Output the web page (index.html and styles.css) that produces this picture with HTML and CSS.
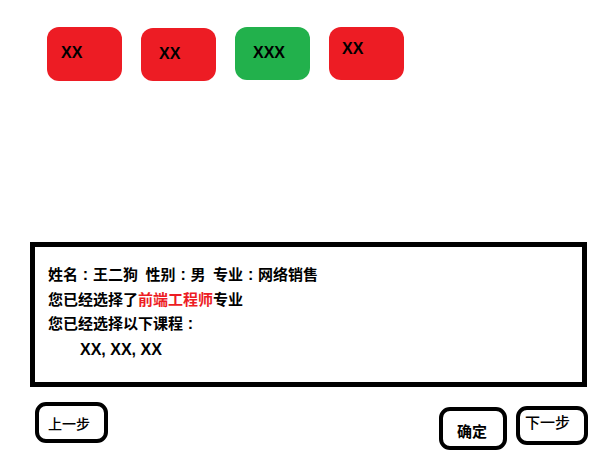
FILE: index.html
```html
<!DOCTYPE html>
<html lang="zh-CN">
<head>
<meta charset="utf-8">
<title>选课确认</title>
<link rel="stylesheet" href="styles.css">
</head>
<body>
<div class="page">
  <div class="tiles">
    <div class="tile tile--a">XX</div>
    <div class="tile tile--b">XX</div>
    <div class="tile tile--c tile--green">XXX</div>
    <div class="tile tile--d">XX</div>
  </div>

  <div class="summary">
    <p class="line">姓名<span class="colon">:</span>王二狗<span class="gap"></span>性别<span class="colon">:</span>男<span class="gap"></span>专业<span class="colon">:</span>网络销售</p>
    <p class="line">您已经选择了<span class="hl">前端工程师</span>专业</p>
    <p class="line">您已经选择以下课程<span class="colon">:</span></p>
    <p class="line line--courses">XX, XX, XX</p>
  </div>

  <div class="actions">
    <button class="btn btn--prev">上一步</button>
    <div class="actions-right">
      <button class="btn btn--ok">确定</button>
      <button class="btn btn--next">下一步</button>
    </div>
  </div>
</div>
</body>
</html>
```

FILE: styles.css
```css
* { box-sizing: border-box; }

html, body {
  margin: 0;
  padding: 0;
  background: #ffffff;
}

.page {
  width: 614px;
  height: 460px;
  padding-top: 27px;
  font-family: "Liberation Sans", "Noto Sans CJK SC", sans-serif;
  color: #000;
}

.tiles {
  display: flex;
  align-items: flex-start;
  padding-left: 47px;
  gap: 19px;
}

.tile {
  width: 75px;
  height: 53px;
  border-radius: 12px;
  background: #ed1c24;
  font-family: "Liberation Sans", Arial, sans-serif;
  font-weight: bold;
  font-size: 16px;
  line-height: 18px;
  color: #000;
}

.tile--green { background: #22b14c; }

.tile--a { height: 54px; padding: 17px 0 0 14px; }
.tile--b { margin-top: 1px; padding: 17px 0 0 18px; }
.tile--c { padding: 17px 0 0 18px; }
.tile--d { padding: 13px 0 0 13px; }

.summary {
  margin: 161px 0 0 30px;
  width: 557px;
  height: 145px;
  border: 5px solid #000;
  padding: 16px 0 0 13px;
}

.line {
  margin: 0;
  font-family: "Liberation Sans", "Noto Sans CJK SC", sans-serif;
  font-weight: bold;
  font-size: 15px;
  line-height: 24.5px;
  white-space: nowrap;
}

.colon {
  display: inline-block;
  width: 15px;
  text-align: center;
  font-family: "Liberation Sans", sans-serif;
  font-size: 16px;
}

.gap {
  display: inline-block;
  width: 7.5px;
}

.hl { color: #ed1c24; }

.line--courses {
  font-size: 16px;
  padding-left: 32px;
  line-height: 25px;
}

.actions {
  display: flex;
  justify-content: space-between;
  align-items: flex-start;
  margin-top: 15px;
  padding: 0 26px 0 35px;
}

.actions-right {
  display: flex;
  align-items: flex-start;
  gap: 9px;
}

.btn {
  display: flex;
  align-items: center;
  margin: 0;
  border: 4px solid #000;
  border-radius: 11px;
  background: #fff;
  color: #000;
  font-family: "Noto Sans CJK SC", sans-serif;
  font-size: 14px;
  line-height: 16px;
  font-weight: 500;
  cursor: pointer;
}

.btn--prev {
  width: 73px;
  height: 41px;
  padding: 0 0 0 9px;
}

.btn--ok {
  margin-top: 5px;
  width: 68px;
  height: 43px;
  padding: 5px 0 0 14px;
  font-size: 15px;
  font-weight: bold;
}

.btn--next {
  margin-top: 4px;
  width: 72px;
  height: 39px;
  padding: 0 0 7px 5px;
  font-size: 15px;
}
```
